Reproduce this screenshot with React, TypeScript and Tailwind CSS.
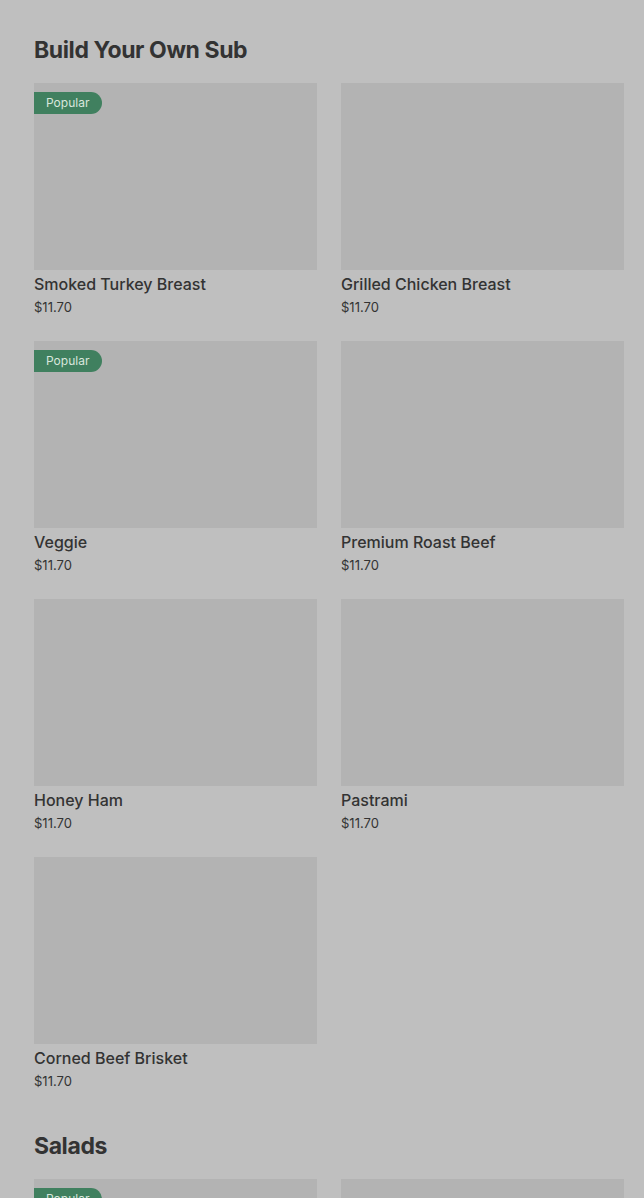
type Item = { name: string; price: string; popular?: boolean };

const subs: Item[] = [
  { name: 'Smoked Turkey Breast', price: '$11.70', popular: true },
  { name: 'Grilled Chicken Breast', price: '$11.70' },
  { name: 'Veggie', price: '$11.70', popular: true },
  { name: 'Premium Roast Beef', price: '$11.70' },
  { name: 'Honey Ham', price: '$11.70' },
  { name: 'Pastrami', price: '$11.70' },
  { name: 'Corned Beef Brisket', price: '$11.70' },
];

const salads: Item[] = [
  { name: 'Chef Salad', price: '$11.70', popular: true },
  { name: 'Garden Salad', price: '$11.70' },
];

function Card({ item }: { item: Item }) {
  return (
    <div className="flex flex-col">
      <div className="relative h-[187px] bg-[#b3b3b3]">
        {item.popular && (
          <span className="absolute left-0 top-[9px] h-[22px] w-[68px] flex items-center pl-[12px] rounded-r-full bg-[#40805f] text-[12px] text-[#d9e6dd]">
            Popular
          </span>
        )}
      </div>
      <div className="mt-[4px] text-[16px] leading-[20px] font-medium text-[#333333]">{item.name}</div>
      <div className="mt-[4px] text-[13px] leading-[18px] text-[#333333]">{item.price}</div>
    </div>
  );
}

function Section({ title, items }: { title: string; items: Item[] }) {
  return (
    <section className="flex flex-col">
      <h2 className="text-[23px] leading-[32px] font-bold tracking-[-0.4px] text-[#333333]">{title}</h2>
      <div className="mt-[17px] grid grid-cols-2 gap-x-[24px] gap-y-[25px]">
        {items.map((it) => (
          <Card key={it.name} item={it} />
        ))}
      </div>
    </section>
  );
}

export default function App() {
  return (
    <div
      className="h-[1198px] overflow-hidden bg-[#bfbfbf] pl-[34px] pr-[20px] pt-[34px] flex flex-col gap-[40px]"
      style={{ fontFamily: 'Inter, "Noto Sans", sans-serif' }}
    >
      <Section title="Build Your Own Sub" items={subs} />
      <Section title="Salads" items={salads} />
    </div>
  );
}
